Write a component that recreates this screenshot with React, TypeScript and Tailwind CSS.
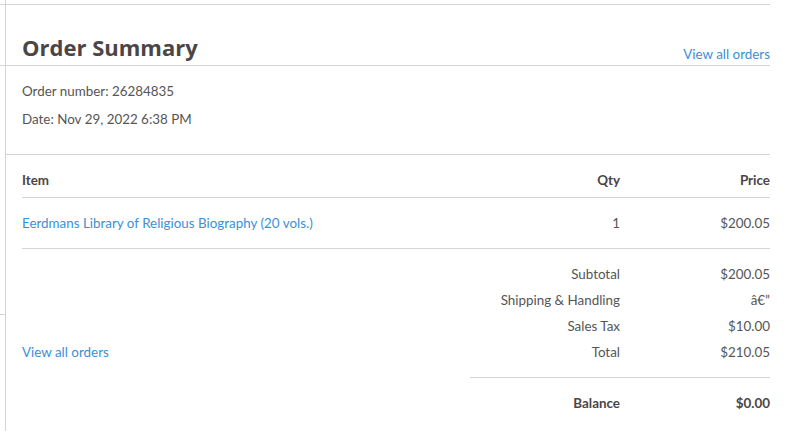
import React from 'react';

const rows = [
  { label: 'Subtotal', value: '$200.05' },
  { label: 'Shipping & Handling', value: 'â€”' },
  { label: 'Sales Tax', value: '$10.00' },
  { label: 'Total', value: '$210.05' },
];

export default function App() {
  return (
    <div
      className="w-[797px] h-[431px] bg-white overflow-hidden flex text-[13.4px] text-[#555]"
      style={{ fontFamily: 'Lato, "Open Sans", sans-serif' }}
    >
      {/* edge of the neighbouring column */}
      <div className="w-[6px] h-full border-r border-[#d4d4d4] flex flex-col">
        <div className="h-[5px] border-b border-[#d4d4d4]" />
        <div className="h-[61px] border-b border-[#d4d4d4]" />
        <div className="h-[249px] border-b border-[#d4d4d4]" />
      </div>

      <div className="w-[764px] flex flex-col">
        <div className="h-[5px] border-b border-[#d4d4d4]" />

        {/* header */}
        <div className="h-[61px] border-b border-[#d4d4d4] pl-4 flex items-end justify-between">
          <h1
            className="text-[22px] leading-[28px] font-bold text-[#4b4545] mb-[4px]"
            style={{ fontFamily: '"Open Sans", sans-serif' }}
          >
            Order Summary
          </h1>
          <a className="text-[#3b8fd9] leading-4 mb-[3px]">View all orders</a>
        </div>

        {/* order info */}
        <div className="h-[89px] border-b border-[#d4d4d4] pl-4 pt-[11px]">
          <p className="leading-[28px]">Order number: 26284835</p>
          <p className="leading-[28px]">Date: Nov 29, 2022 6:38 PM</p>
        </div>

        <div className="pl-4">
          {/* table header */}
          <div className="grid grid-cols-[1fr_150px_150px] pt-[17px] pb-[9px] border-b border-[#d4d4d4] leading-4 font-bold text-[#4b4545]">
            <span>Item</span>
            <span className="text-right">Qty</span>
            <span className="text-right">Price</span>
          </div>

          {/* item row */}
          <div className="grid grid-cols-[1fr_150px_150px] py-[17px] border-b border-[#d4d4d4] leading-4">
            <a className="text-[#3b8fd9]">Eerdmans Library of Religious Biography (20 vols.)</a>
            <span className="text-right">1</span>
            <span className="text-right">$200.05</span>
          </div>

          {/* totals */}
          <div className="grid grid-cols-[1fr_150px_150px] pt-3 leading-[26px]">
            {rows.map((r, i) => (
              <React.Fragment key={r.label}>
                {i === 3 ? (
                  <a className="text-[#3b8fd9]">View all orders</a>
                ) : (
                  <span />
                )}
                <span className="text-right">{r.label}</span>
                <span className="text-right">{r.value}</span>
              </React.Fragment>
            ))}
            <div className="col-start-2 col-span-2 mt-3 border-b border-[#d4d4d4]" />
            <span className="col-start-2 text-right font-bold text-[#4b4545] mt-3">Balance</span>
            <span className="text-right font-bold text-[#4b4545] mt-3">$0.00</span>
          </div>
        </div>
      </div>
    </div>
  );
}
